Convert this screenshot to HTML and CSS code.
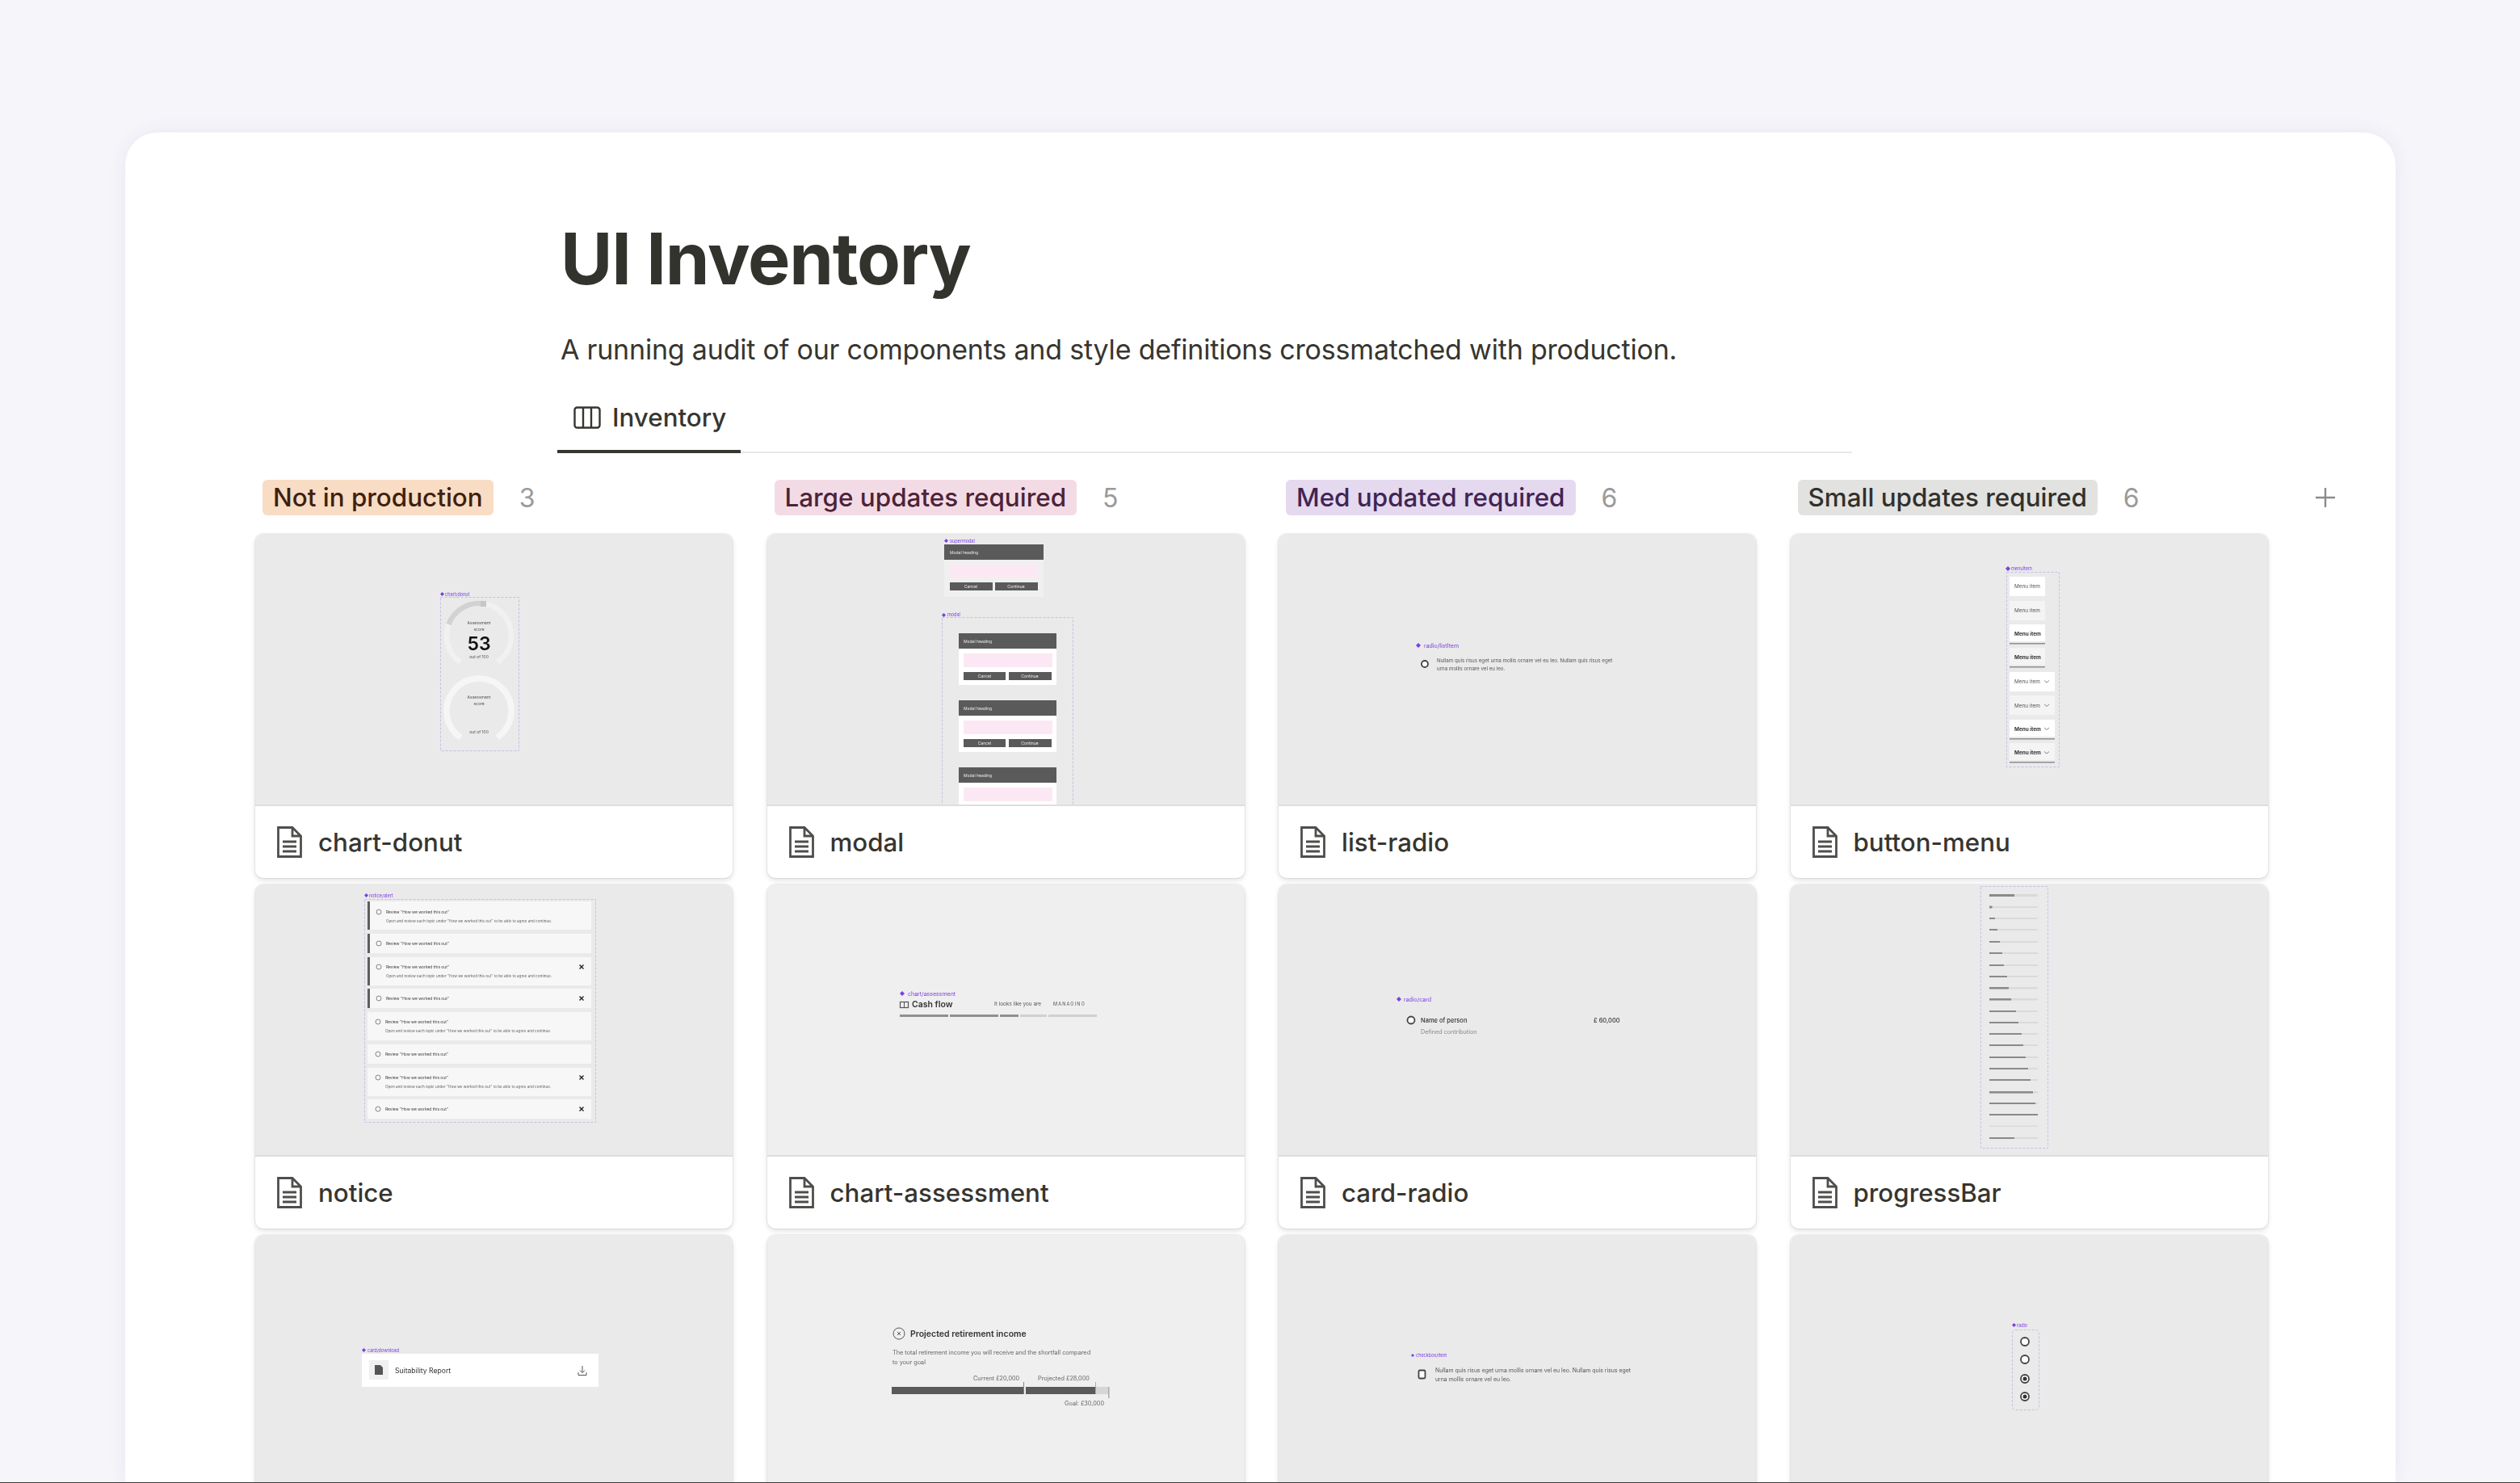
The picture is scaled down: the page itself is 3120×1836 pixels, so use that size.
FILE: index.html
```html
<!DOCTYPE html>
<html lang="en">
<head>
<meta charset="UTF-8">
<title>UI Inventory</title>
<link rel="stylesheet" href="styles.css">
</head>
<body>

<svg class="defs" width="0" height="0">
    <symbol id="page" viewBox="0 0 31 39">
        <path d="M1.5 1.5H19L29.5 12V37.5H1.5Z M19 1.5V12H29.5 M7 19H24 M7 25H24 M7 31H24" fill="none" stroke="#4e4e4c" stroke-width="2.8"/>
    </symbol>
    <symbol id="diamond" viewBox="0 0 8 8">
        <path d="M4 0L8 4L4 8L0 4Z" fill="#7b3fe4"/>
    </symbol>
</svg>

<div class="panel">

    <div class="head">
        <h1>UI Inventory</h1>
        <p class="sub">A running audit of our components and style definitions crossmatched with production.</p>
        <div class="tabs">
            <div class="tab">
                <svg class="tab-icon" viewBox="0 0 34 28">
                    <rect x="1.5" y="1.5" width="31" height="25" rx="3" fill="none" stroke="#37352f" stroke-width="2.4"/>
                    <path d="M12 2V26M22 2V26" stroke="#37352f" stroke-width="2.4"/>
                </svg>
                Inventory
            </div>
        </div>
    </div>

    <div class="board-head">
        <div class="col-head">
            <span class="pill peach">Not in production</span><span class="count">3</span>
        </div>
        <div class="col-head">
            <span class="pill pink">Large updates required</span><span class="count">5</span>
        </div>
        <div class="col-head">
            <span class="pill purple">Med updated required</span><span class="count">6</span>
        </div>
        <div class="col-head">
            <span class="pill grey">Small updates required</span><span class="count">6</span>
        </div>
        <div class="add">
            <svg viewBox="0 0 26 26" width="26" height="26"><path d="M13 1V25M1 13H25" stroke="#8c8c8a" stroke-width="2.4"/></svg>
        </div>
    </div>

    <div class="board">

        <!-- row 1 -->
        <div class="card">
            <div class="thumb">
                <svg viewBox="0 0 591 335">
                    <rect class="frame" x="229.5" y="78.5" width="97" height="190"/>
                    <use href="#diamond" x="229" y="72" width="5" height="5"/>
                    <text class="lbl" x="235" y="75">chart/donut</text>
                    <path class="arc" d="M254.4 159A40 40 0 1 1 299.6 159"/>
                    <path class="arc-on" d="M239.5 112A40 40 0 0 1 282 86.3"/>
                    <rect x="279" y="83" width="7" height="7" fill="#c6c6c6"/>
                    <text class="tiny mid" x="277" y="110">Assessment</text>
                    <text class="tiny mid" x="277" y="118">score</text>
                    <text class="score" x="277" y="136">53</text>
                    <text class="tiny mid" x="277" y="152">out of 100</text>
                    <path class="arc-pale" d="M254.4 252A40 40 0 1 1 299.6 252"/>
                    <text class="tiny mid" x="277" y="202">Assessment</text>
                    <text class="tiny mid" x="277" y="210">score</text>
                    <text class="tiny mid" x="277" y="245">out of 100</text>
                </svg>
            </div>
            <div class="name"><svg class="page"><use href="#page"/></svg>chart-donut</div>
        </div>

        <div class="card">
            <div class="thumb">
                <svg viewBox="0 0 591 335">
                    <use href="#diamond" x="219" y="6" width="5" height="5"/>
                    <text class="lbl" x="226" y="9">supermodal</text>
                    <rect x="219" y="32" width="123" height="46" fill="#f0f0f0"/>
                    <rect class="dark" x="219" y="13" width="123" height="19"/>
                    <text class="tiny white" x="226" y="23">Modal heading</text>
                    <rect class="blush" x="226" y="38" width="109" height="16"/>
                    <rect class="dark" x="226" y="60" width="53" height="10"/>
                    <rect class="dark" x="282" y="60" width="53" height="10"/>
                    <text class="tiny white mid" x="252" y="65">Cancel</text>
                    <text class="tiny white mid" x="308" y="65">Continue</text>

                    <rect class="frame" x="216.5" y="103.5" width="162" height="240"/>
                    <use href="#diamond" x="216" y="98" width="5" height="5"/>
                    <text class="lbl" x="223" y="100">modal</text>

                    <rect x="237" y="142" width="121" height="45" fill="#fff"/>
                    <rect class="dark" x="237" y="123" width="121" height="19"/>
                    <text class="tiny white" x="243" y="133">Modal heading</text>
                    <rect class="blush" x="243" y="148" width="110" height="17"/>
                    <rect class="dark" x="243" y="171" width="52" height="10"/>
                    <rect class="dark" x="299" y="171" width="53" height="10"/>
                    <text class="tiny white mid" x="269" y="176">Cancel</text>
                    <text class="tiny white mid" x="325" y="176">Continue</text>

                    <rect x="237" y="225" width="121" height="45" fill="#fff"/>
                    <rect class="dark" x="237" y="206" width="121" height="19"/>
                    <text class="tiny white" x="243" y="216">Modal heading</text>
                    <rect class="blush" x="243" y="231" width="110" height="17"/>
                    <rect class="dark" x="243" y="254" width="52" height="10"/>
                    <rect class="dark" x="299" y="254" width="53" height="10"/>
                    <text class="tiny white mid" x="269" y="259">Cancel</text>
                    <text class="tiny white mid" x="325" y="259">Continue</text>

                    <rect x="237" y="308" width="121" height="30" fill="#fff"/>
                    <rect class="dark" x="237" y="289" width="121" height="19"/>
                    <text class="tiny white" x="243" y="299">Modal heading</text>
                    <rect class="blush" x="243" y="314" width="110" height="17"/>
                </svg>
            </div>
            <div class="name"><svg class="page"><use href="#page"/></svg>modal</div>
        </div>

        <div class="card">
            <div class="thumb">
                <svg viewBox="0 0 591 335">
                    <use href="#diamond" x="170" y="135" width="6" height="6"/>
                    <text class="lbl big" x="180" y="138">radio/listItem</text>
                    <circle class="radio" cx="181" cy="161" r="4"/>
                    <text class="body" x="196" y="156">Nullam quis risus eget urna mollis ornare vel eu leo. Nullam quis risus eget</text>
                    <text class="body" x="196" y="166">urna mollis ornare vel eu leo.</text>
                </svg>
            </div>
            <div class="name"><svg class="page"><use href="#page"/></svg>list-radio</div>
        </div>

        <div class="card">
            <div class="thumb">
                <svg viewBox="0 0 591 335">
                    <rect class="frame" x="267.5" y="47.5" width="65" height="241"/>
                    <use href="#diamond" x="266" y="40" width="6" height="6"/>
                    <text class="lbl" x="273" y="43">menuItem</text>

                    <rect x="271" y="53" width="44" height="24" fill="#fff"/>
                    <text class="menu" x="277" y="65">Menu item</text>
                    <rect x="271" y="83" width="44" height="24" fill="#f4f4f4"/>
                    <text class="menu" x="277" y="95">Menu item</text>
                    <rect x="271" y="112" width="44" height="21" fill="#fff"/>
                    <text class="menu bold" x="277" y="124">Menu item</text>
                    <rect class="rule" x="271" y="135" width="44" height="1.5"/>
                    <rect x="271" y="141" width="44" height="21" fill="#f4f4f4"/>
                    <text class="menu bold" x="277" y="153">Menu item</text>
                    <rect class="rule" x="271" y="164" width="44" height="1.5"/>

                    <rect x="271" y="171" width="56" height="24" fill="#fff"/>
                    <text class="menu" x="277" y="183">Menu item</text>
                    <path class="chev" d="M314 181.5L317 184L320 181.5"/>
                    <rect x="271" y="200" width="56" height="24" fill="#f4f4f4"/>
                    <text class="menu" x="277" y="212.5">Menu item</text>
                    <path class="chev" d="M314 211L317 213.5L320 211"/>
                    <rect x="271" y="230" width="56" height="21" fill="#fff"/>
                    <text class="menu bold" x="277" y="241.5">Menu item</text>
                    <path class="chev" d="M314 240L317 242.5L320 240"/>
                    <rect class="rule" x="271" y="253" width="56" height="1.5"/>
                    <rect x="271" y="259" width="56" height="21" fill="#f4f4f4"/>
                    <text class="menu bold" x="277" y="271">Menu item</text>
                    <path class="chev" d="M314 269.5L317 272L320 269.5"/>
                    <rect class="rule" x="271" y="282" width="56" height="1.5"/>
                </svg>
            </div>
            <div class="name"><svg class="page"><use href="#page"/></svg>button-menu</div>
        </div>

        <!-- row 2 -->
        <div class="card">
            <div class="thumb">
                <svg viewBox="0 0 591 335">
                    <rect class="frame" x="135.5" y="18.5" width="286" height="276"/>
                    <use href="#diamond" x="135" y="11" width="5" height="5"/>
                    <text class="lbl" x="141" y="14">notice/alert</text>

                    <rect class="note" x="139" y="21" width="277" height="35"/>
                    <rect class="bar" x="139" y="21" width="3" height="35"/>
                    <circle class="ring" cx="153" cy="34" r="3"/>
                    <text class="micro" x="162" y="34">Review "How we worked this out"</text>
                    <text class="micro soft" x="162" y="45">Open and review each topic under "How we worked this out" to be able to agree and continue.</text>

                    <rect class="note" x="139" y="61" width="277" height="24"/>
                    <rect class="bar" x="139" y="61" width="3" height="24"/>
                    <circle class="ring" cx="153" cy="73" r="3"/>
                    <text class="micro" x="162" y="73">Review "How we worked this out"</text>

                    <rect class="note" x="139" y="90" width="277" height="35"/>
                    <rect class="bar" x="139" y="90" width="3" height="35"/>
                    <circle class="ring" cx="153" cy="102" r="3"/>
                    <text class="micro" x="162" y="102">Review "How we worked this out"</text>
                    <text class="micro soft" x="162" y="113">Open and review each topic under "How we worked this out" to be able to agree and continue.</text>
                    <path class="cross" d="M401.5 99.5L406.5 104.5M406.5 99.5L401.5 104.5"/>

                    <rect class="note" x="139" y="129" width="277" height="24"/>
                    <rect class="bar" x="139" y="129" width="3" height="24"/>
                    <circle class="ring" cx="153" cy="141" r="3"/>
                    <text class="micro" x="162" y="141">Review "How we worked this out"</text>
                    <path class="cross" d="M401.5 138.5L406.5 143.5M406.5 138.5L401.5 143.5"/>

                    <rect class="note" x="139" y="158" width="277" height="35"/>
                    <circle class="ring" cx="152" cy="170" r="3"/>
                    <text class="micro" x="161" y="170">Review "How we worked this out"</text>
                    <text class="micro soft" x="161" y="181">Open and review each topic under "How we worked this out" to be able to agree and continue.</text>

                    <rect class="note" x="139" y="198" width="277" height="24"/>
                    <circle class="ring" cx="152" cy="210" r="3"/>
                    <text class="micro" x="161" y="210">Review "How we worked this out"</text>

                    <rect class="note" x="139" y="227" width="277" height="35"/>
                    <circle class="ring" cx="152" cy="239" r="3"/>
                    <text class="micro" x="161" y="239">Review "How we worked this out"</text>
                    <text class="micro soft" x="161" y="250">Open and review each topic under "How we worked this out" to be able to agree and continue.</text>
                    <path class="cross" d="M401.5 236.5L406.5 241.5M406.5 236.5L401.5 241.5"/>

                    <rect class="note" x="139" y="266" width="277" height="24"/>
                    <circle class="ring" cx="152" cy="278" r="3"/>
                    <text class="micro" x="161" y="278">Review "How we worked this out"</text>
                    <path class="cross" d="M401.5 275.5L406.5 280.5M406.5 275.5L401.5 280.5"/>
                </svg>
            </div>
            <div class="name"><svg class="page"><use href="#page"/></svg>notice</div>
        </div>

        <div class="card">
            <div class="thumb light">
                <svg viewBox="0 0 591 335">
                    <use href="#diamond" x="164" y="132" width="6" height="6"/>
                    <text class="lbl big" x="174" y="135">chart/assessment</text>
                    <rect x="164.5" y="145.5" width="10" height="7" fill="none" stroke="#555" stroke-width="1.2"/>
                    <path d="M169.5 145.5V152.5" stroke="#555"/>
                    <text class="cash" x="179" y="148">Cash flow</text>
                    <text class="menu" x="281" y="148">It looks like you are</text>
                    <text class="small caps" x="354" y="148">MANAGING</text>
                    <rect class="seg" x="164" y="161" width="60" height="3"/>
                    <rect class="seg" x="226" y="161" width="60" height="3"/>
                    <rect class="seg" x="288" y="161" width="23" height="3"/>
                    <rect class="seg-off" x="313" y="161" width="33" height="3"/>
                    <rect class="seg-off" x="348" y="161" width="60" height="3"/>
                </svg>
            </div>
            <div class="name"><svg class="page"><use href="#page"/></svg>chart-assessment</div>
        </div>

        <div class="card">
            <div class="thumb">
                <svg viewBox="0 0 591 335">
                    <use href="#diamond" x="146" y="139" width="6" height="6"/>
                    <text class="lbl big" x="155" y="142">radio/card</text>
                    <circle class="radio" cx="164" cy="168" r="4.5"/>
                    <text class="strong" x="176" y="168">Name of person</text>
                    <text class="faint" x="176" y="182">Defined contribution</text>
                    <text class="strong" x="390" y="168">£ 60,000</text>
                </svg>
            </div>
            <div class="name"><svg class="page"><use href="#page"/></svg>card-radio</div>
        </div>

        <div class="card">
            <div class="thumb">
                <svg viewBox="0 0 591 335">
                    <rect class="frame" x="235.5" y="2.5" width="83" height="324"/>
                    <rect class="track" x="246" y="12" width="60" height="3"/><rect class="fill" x="246" y="12" width="31" height="3"/>
                    <rect class="track" x="246" y="27" width="60" height="2"/><rect class="fill" x="246" y="26.5" width="3.5" height="3"/>
                    <rect class="track" x="246" y="41" width="60" height="2"/><rect class="fill" x="246" y="41" width="7" height="2"/>
                    <rect class="track" x="246" y="55" width="60" height="2"/><rect class="fill" x="246" y="55" width="10" height="2"/>
                    <rect class="track" x="246" y="70" width="60" height="2"/><rect class="fill" x="246" y="70" width="13" height="2"/>
                    <rect class="track" x="246" y="84" width="60" height="2"/><rect class="fill" x="246" y="84" width="16" height="2"/>
                    <rect class="track" x="246" y="99" width="60" height="2"/><rect class="fill" x="246" y="99" width="18" height="2"/>
                    <rect class="track" x="246" y="113" width="60" height="2"/><rect class="fill" x="246" y="113" width="22" height="2"/>
                    <rect class="track" x="246" y="127" width="60" height="2.5"/><rect class="fill" x="246" y="127" width="24" height="2.5"/>
                    <rect class="track" x="246" y="141" width="60" height="2.5"/><rect class="fill" x="246" y="141" width="27" height="2.5"/>
                    <rect class="track" x="246" y="156" width="60" height="2"/><rect class="fill" x="246" y="156" width="33" height="2"/>
                    <rect class="track" x="246" y="170" width="60" height="2"/><rect class="fill" x="246" y="170" width="36" height="2"/>
                    <rect class="track" x="246" y="184" width="60" height="2"/><rect class="fill" x="246" y="184" width="40" height="2"/>
                    <rect class="track" x="246" y="198" width="60" height="2"/><rect class="fill" x="246" y="198" width="42" height="2"/>
                    <rect class="track" x="246" y="213" width="60" height="2"/><rect class="fill" x="246" y="213" width="45" height="2"/>
                    <rect class="track" x="246" y="227" width="60" height="2"/><rect class="fill" x="246" y="227" width="48" height="2"/>
                    <rect class="track" x="246" y="241" width="60" height="2"/><rect class="fill" x="246" y="241" width="51" height="2"/>
                    <rect class="track" x="246" y="256" width="60" height="2.5"/><rect class="fill" x="246" y="256" width="54" height="2.5"/>
                    <rect class="track" x="246" y="270" width="60" height="2"/><rect class="fill" x="246" y="270" width="57" height="2"/>
                    <rect class="track" x="246" y="284" width="60" height="2"/><rect class="fill" x="246" y="284" width="60" height="2"/>
                    <rect class="track" x="246" y="298.5" width="60" height="1.5"/>
                    <rect class="track" x="246" y="313" width="60" height="2"/><rect class="fill" x="246" y="313" width="31" height="2"/>
                </svg>
            </div>
            <div class="name"><svg class="page"><use href="#page"/></svg>progressBar</div>
        </div>

        <!-- row 3 -->
        <div class="card">
            <div class="thumb">
                <svg viewBox="0 0 591 335">
                    <use href="#diamond" x="132" y="140" width="5" height="5"/>
                    <text class="lbl" x="139" y="143">card/download</text>
                    <rect x="132" y="147" width="293" height="41" fill="#fff"/>
                    <rect x="141" y="155" width="24" height="24" fill="#f0f0f0"/>
                    <path d="M148 161H155L158 164V173H148Z" fill="#555"/>
                    <text class="report" x="173" y="168">Suitability Report</text>
                    <path class="dl" d="M405 162V170M402 167.5L405 170.5L408 167.5M400 170V173.5H410V170"/>
                </svg>
            </div>
        </div>

        <div class="card">
            <div class="thumb light">
                <svg viewBox="0 0 591 335">
                    <circle class="mark" cx="163" cy="122" r="7"/>
                    <path class="mark" d="M161 120L165 124M165 120L161 124"/>
                    <text class="proj" x="177" y="122">Projected retirement income</text>
                    <text class="para" x="155" y="145">The total retirement income you will receive and the shortfall compared</text>
                    <text class="para" x="155" y="157">to your goal</text>
                    <text class="para" x="255" y="177">Current £20,000</text>
                    <text class="para" x="335" y="177">Projected £28,000</text>
                    <rect class="dark" x="154" y="188" width="163" height="9"/>
                    <rect class="dark" x="320" y="188" width="86" height="9"/>
                    <rect x="406" y="188" width="17" height="9" fill="#d6d6d6"/>
                    <rect x="317" y="182" width="1" height="15" fill="#888"/>
                    <rect x="406" y="182" width="1" height="15" fill="#aaa"/>
                    <rect x="422" y="188" width="1.5" height="14" fill="#aaa"/>
                    <text class="para" x="368" y="208">Goal: £30,000</text>
                </svg>
            </div>
        </div>

        <div class="card">
            <div class="thumb">
                <svg viewBox="0 0 591 335">
                    <use href="#diamond" x="164" y="147" width="4" height="4"/>
                    <text class="lbl" x="170" y="149">checkbox/item</text>
                    <rect class="radio" x="173.5" y="167.5" width="8" height="10" rx="1.5"/>
                    <text class="body wide" x="194" y="167">Nullam quis risus eget urna mollis ornare vel eu leo. Nullam quis risus eget</text>
                    <text class="body wide" x="194" y="178">urna mollis ornare vel eu leo.</text>
                </svg>
            </div>
        </div>

        <div class="card">
            <div class="thumb">
                <svg viewBox="0 0 591 335">
                    <rect class="frame" x="274.5" y="117.5" width="33" height="99" rx="4"/>
                    <use href="#diamond" x="274" y="109" width="5" height="5"/>
                    <text class="lbl" x="280" y="112">radio</text>
                    <circle class="radio" cx="290" cy="132" r="5"/>
                    <circle class="radio" cx="290" cy="154" r="5"/>
                    <circle class="radio" cx="290" cy="178" r="5"/>
                    <circle cx="290" cy="178" r="2.5" fill="#333"/>
                    <circle class="radio" cx="290" cy="200" r="5"/>
                    <circle cx="290" cy="200" r="2.5" fill="#333"/>
                </svg>
            </div>
        </div>

    </div>
</div>

<div class="edge"></div>

</body>
</html>
```

FILE: styles.css
```css
html, body {
    margin: 0;
    height: 100%;
}

body {
    font-family: "Inter", sans-serif;
    background: #f5f5fa;
    color: #37352f;
    overflow: hidden;
    display: flex;
    flex-direction: column;
}

.defs {
    position: absolute;
}

.panel {
    flex: 1;
    min-height: 0;
    overflow: hidden;
    margin: 164px 154px 0 155px;
    background: white;
    border-radius: 40px 40px 0 0;
    box-shadow: 0 0 24px rgba(60, 60, 110, 0.07);
}

.edge {
    height: 1px;
    background: #3a3a3a;
}

/* page title block */
.head {
    padding: 106px 0 0 535px;
    width: 1603px;
}

h1 {
    margin: 0 0 0 4px;
    font-size: 88px;
    line-height: 100px;
    font-weight: 700;
    letter-spacing: -1.2px;
    color: #33332d;
}

.sub {
    margin: 40px 0 0 4px;
    font-size: 34px;
    line-height: 46px;
    letter-spacing: -0.2px;
}

.tabs {
    margin-top: 29px;
    border-bottom: 2px solid #e8e8e6;
}

.tab {
    display: flex;
    align-items: center;
    gap: 14px;
    width: 207px;
    height: 64px;
    padding: 0 0 8px 20px;
    font-size: 31.3px;
    font-weight: 500;
    border-bottom: 4px solid #37352f;
    margin-bottom: -2px;
}

.tab-icon {
    width: 34px;
    height: 28px;
}

/* board */
.board-head {
    display: flex;
    gap: 42.5px;
    padding: 33px 0 0 161px;
    margin-bottom: 23px;
}

.col-head {
    display: flex;
    align-items: center;
    width: 582px;
    padding-left: 9px;
    height: 44px;
}

.pill {
    padding: 0 13px;
    height: 44px;
    line-height: 44px;
    border-radius: 6px;
    font-size: 31.4px;
    font-weight: 500;
    white-space: nowrap;
}

.peach { background: #f8dcc4; color: #40200e; }
.pink { background: #f3dbe6; color: #4c2337; }
.purple { background: #e4d9ee; color: #412454; }
.grey { background: #e2e2e0; color: #32302c; }

.count {
    margin-left: 32px;
    font-size: 32px;
    color: #9a9a98;
}

.add {
    margin-left: 16px;
    height: 44px;
    display: flex;
    align-items: center;
}

.board {
    display: grid;
    grid-template-columns: repeat(4, 591px);
    gap: 8px 42.5px;
    padding-left: 161px;
}

.card {
    height: 426px;
    background: white;
    border-radius: 10px;
    overflow: hidden;
    box-shadow: 0 0 0 1px rgba(15, 15, 15, 0.06), 0 3px 6px rgba(15, 15, 15, 0.12);
}

.thumb {
    height: 335px;
    background: #eaeaea;
    border-bottom: 2px solid #dededc;
}

.thumb.light {
    background: #efefef;
}

.thumb svg {
    display: block;
    width: 591px;
    height: 335px;
    filter: blur(0.5px);
}

.name {
    display: flex;
    align-items: center;
    gap: 20px;
    height: 89px;
    padding-left: 27px;
    font-size: 31.3px;
    font-weight: 500;
}

.page {
    width: 31px;
    height: 39px;
}

/* inside the thumbnails */
.thumb text {
    font-family: "Inter", sans-serif;
    dominant-baseline: central;
    fill: #444;
}

.frame {
    fill: none;
    stroke: #c6bfe4;
    stroke-width: 1;
    stroke-dasharray: 3 2;
}

.thumb .lbl {
    font-size: 5.5px;
    fill: #7b3fe4;
}

.thumb .lbl.big {
    font-size: 7px;
}

.thumb .tiny {
    font-size: 5px;
    fill: #555;
}

.thumb .mid {
    text-anchor: middle;
}

.thumb .white {
    fill: #e8e8e8;
}

.thumb .score {
    font-size: 23px;
    font-weight: 600;
    text-anchor: middle;
    fill: #111;
}

.arc, .arc-on, .arc-pale {
    fill: none;
    stroke-width: 6.5;
}

.arc { stroke: #f1f1f1; }
.arc-on { stroke: #d2d2d2; }
.arc-pale { stroke: #f6f6f6; stroke-width: 7.5; }

.dark { fill: #5a5a5a; }
.blush { fill: #fce8f4; }

.thumb .small {
    font-size: 5.5px;
    fill: #555;
}

.thumb .body {
    font-size: 6.2px;
    fill: #555;
}

.thumb .body.wide {
    font-size: 6.9px;
}

.thumb .menu {
    font-size: 6.4px;
    fill: #555;
}

.thumb .bold {
    font-weight: 700;
    fill: #333;
}

.thumb .strong {
    font-size: 7.5px;
    font-weight: 500;
    fill: #333;
}

.thumb .faint {
    font-size: 7.2px;
    fill: #888;
}

.thumb .caps {
    letter-spacing: 1.2px;
}

.radio {
    fill: white;
    stroke: #444;
    stroke-width: 1.8;
}

.rule { fill: #8e8e8e; }

.chev {
    fill: none;
    stroke: #666;
    stroke-width: 0.8;
}

.note { fill: #f7f7f7; }
.bar { fill: #5e5e5e; }

.ring {
    fill: none;
    stroke: #777;
    stroke-width: 0.9;
}

.thumb .micro {
    font-size: 4.9px;
    fill: #444;
}

.thumb .micro.soft {
    font-size: 4.6px;
    fill: #666;
}

.cross {
    fill: none;
    stroke: #222;
    stroke-width: 1.4;
}

.thumb .cash {
    font-size: 10.5px;
    font-weight: 600;
    fill: #333;
}

.seg { fill: #8f8f8f; }
.seg-off { fill: #d0d0d0; }

.track { fill: #dadada; }
.fill { fill: #8a8a8a; }

.thumb .report {
    font-size: 8.6px;
    fill: #333;
}

.dl {
    fill: none;
    stroke: #555;
    stroke-width: 1;
}

.mark {
    fill: none;
    stroke: #555;
    stroke-width: 1;
}

.thumb .proj {
    font-size: 10.5px;
    font-weight: 600;
    fill: #333;
}

.thumb .para {
    font-size: 7.3px;
    fill: #666;
}
```
